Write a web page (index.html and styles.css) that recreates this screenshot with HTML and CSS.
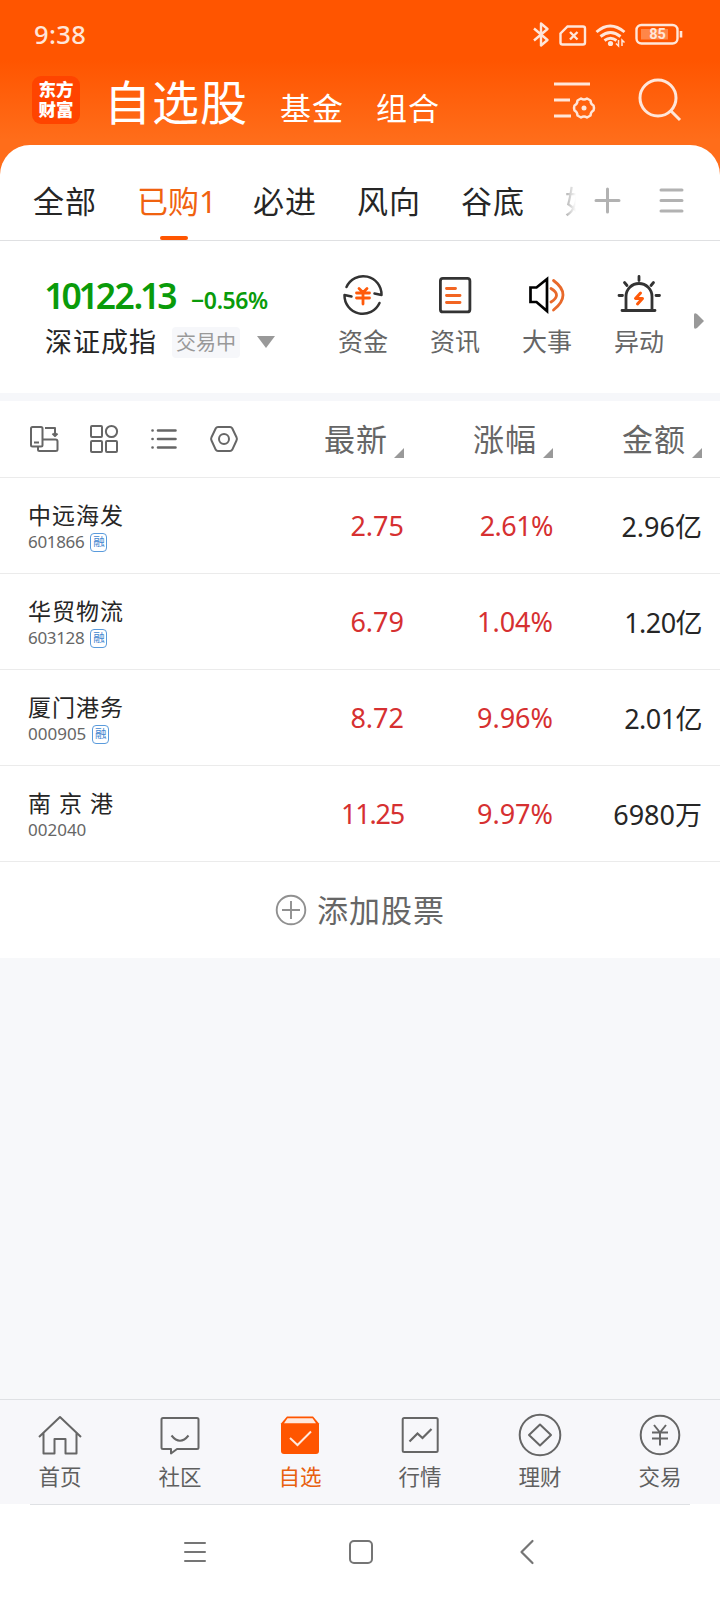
FILE: index.html
```html
<!DOCTYPE html>
<html lang="zh-CN">
<head>
    <meta charset="UTF-8">
    <meta name="viewport" content="width=device-width, initial-scale=1.0">
    <title>自选股</title>
    <link rel="stylesheet" href="styles.css">
</head>
<body>

<header class="header">
    <div class="status">
        <span class="time">9:38</span>
        <svg class="status-icons" width="156" height="30" viewBox="0 0 156 30" fill="none" stroke="#ffe6d9" stroke-width="2.400">
            <!-- bluetooth -->
            <path d="M2 8.500l13.500 11.500-6.500 5.500V3.500l6.500 5.500L2 20.500" stroke-linejoin="round"/>
            <!-- no sim -->
            <path d="M35.500 6.500H51q2 0 2 2v14q0 2-2 2H30.500q-2 0-2-2v-9z"/>
            <path d="M38 12l7.500 7.500M45.500 12l-7.500 7.500"/>
            <!-- wifi -->
            <path d="M64.500 12q13.500-12 28 0M68.500 16.500q10-8 20 0M72.500 20.500q6-4.500 12 0" stroke-width="2.900"/>
            <circle cx="78.500" cy="23.500" r="2.600" fill="#ffe6d9" stroke="none"/>
            <path d="M86.500 20v6l-2.500-2.500M90 26v-6l2.500 2.500" stroke-width="1.500"/>
            <!-- battery -->
            <rect x="104.500" y="5" width="41" height="18.500" rx="5"/>
            <rect x="109" y="9" width="27" height="10.500" fill="#ff8648" stroke="none"/>
            <path d="M149 11v6.500" stroke-width="2.600"/>
            <text x="125.500" y="19.300" class="battery-num">85</text>
        </svg>
    </div>
    <div class="titlebar">
        <div class="logo"><span>东方</span><span>财富</span></div>
        <nav class="top-nav">
            <span class="top-main">自选股</span>
            <span class="top-sub">基金</span>
            <span class="top-sub">组合</span>
        </nav>
        <svg class="manage" width="44" height="40" viewBox="0 0 44 40" fill="none" stroke="#ffe6d9" stroke-width="3">
            <path d="M1 5h36M1 21h16M1 37h17"/>
            <path d="M28 19.500q3 2 6 0l3.500 2q0 3.500 3 5l.5 2.500-.5 2.500q-3 1.500-3 5l-3.500 2q-3-2-6 0l-3.500-2q0-3.500-3-5L21 29l.5-2.500q3-1.500 3-5z" stroke-width="2.500" stroke-linejoin="round"/>
            <circle cx="31" cy="29" r="2.500" fill="#ffe6d9" stroke="none"/>
        </svg>
        <svg class="search" width="44" height="44" viewBox="0 0 44 44" fill="none" stroke="#ffe6d9" stroke-width="3">
            <circle cx="20" cy="20" r="18"/>
            <path d="M32 32l10 10"/>
        </svg>
    </div>
</header>

<main class="sheet">
    <div class="tabs">
        <div class="tab-list">
            <span class="tab">全部</span>
            <span class="tab active">已购1</span>
            <span class="tab">必进</span>
            <span class="tab">风向</span>
            <span class="tab">谷底</span>
            <span class="tab cut">好</span>
        </div>
        <svg class="tab-tools" width="90" height="28" viewBox="0 0 90 28" fill="none" stroke="#b2b2b2" stroke-width="3" stroke-linecap="round">
            <path d="M2 13.500h23M13.500 2v23M67 3h21M67 13.500h21M67 24h21"/>
        </svg>
    </div>

    <section class="market">
        <div class="index">
            <div class="index-top"><span class="index-value"><i class="one">1</i>0<i class="one">1</i>22.<i class="one">1</i>3</span><span class="index-pct">−0.56%</span></div>
            <div class="index-bottom">
                <span class="index-name">深证成指</span>
                <span class="index-state">交易中</span>
                <i class="caret"></i>
            </div>
        </div>
        <div class="shortcuts">
            <div class="shortcut">
                <svg width="44" height="44" viewBox="0 0 44 44" fill="none" stroke="#333" stroke-width="2.500" stroke-linecap="round" stroke-linejoin="round">
                    <path d="M5.500 14A18.300 18.300 0 0 1 40.500 22l-7-1.500M38.500 30A18.300 18.300 0 0 1 3.500 22l7 1.500"/>
                    <path d="M18 15.500l4 4 4-4M15.500 20h13M15.500 25h13M22 19.500v11.500" stroke="#ff5a0a" stroke-width="2.800"/>
                </svg>
                <span>资金</span>
            </div>
            <div class="shortcut">
                <svg width="44" height="44" viewBox="0 0 44 44" fill="none" stroke="#333" stroke-width="2.800" stroke-linecap="round">
                    <rect x="7.400" y="5.400" width="29.500" height="33.500" rx="2.500"/>
                    <path d="M13.500 15.500h9M13.500 22.500h13.500M13.500 29.500h13.500" stroke="#f26522" stroke-width="2.900"/>
                </svg>
                <span>资讯</span>
            </div>
            <div class="shortcut">
                <svg width="44" height="44" viewBox="0 0 44 44" fill="none" stroke="#000" stroke-width="2.700" stroke-linecap="round">
                    <path d="M5.500 14.500h6l10.500-8.500v32l-10.500-9h-6z"/>
                    <path d="M26 15.500q11 6.500 0 13.500M28.500 7.500q19 14 0 29.500" stroke="#e8692b" stroke-width="2.800"/>
                </svg>
                <span>大事</span>
            </div>
            <div class="shortcut">
                <svg width="44" height="44" viewBox="0 0 44 44" fill="none" stroke="#333" stroke-width="2.800" stroke-linecap="round">
                    <path d="M9 37.500V23.500a13 13 0 0 1 26 0v14M5 37.500h33M22 3.500v4M7.500 9.500l2.500 3M36.500 9.500l-2.500 3M2 22.500h3.500M39 22.500h3.500"/>
                    <path d="M23.500 20l-5 5.500h7l-5 5.500" stroke="#ff5a0a" stroke-width="3" stroke-linejoin="round"/>
                </svg>
                <span>异动</span>
            </div>
        </div>
        <svg class="more" width="10" height="16" viewBox="0 0 10 16"><path d="M0 2q0-3 3-1l7 7-7 7q-3 2-3-1z" fill="#999"/></svg>
    </section>

    <section class="stocks">
        <div class="row head">
            <div class="tools">
                <svg width="30" height="30" viewBox="0 0 30 30" fill="none" stroke="#666" stroke-width="2" stroke-linejoin="round">
                    <rect x="2" y="3" width="11.500" height="19.500" rx="1.500"/>
                    <path d="M5 18.500h5M16 4h10v8M23.500 9.500l2.500 2.500 2.500-2.500M13.500 15.500h13q2 0 2 2v8q0 1.500-2 1.500H10.500q-1.500 0-1.500-1.500V23"/>
                </svg>
                <svg width="30" height="30" viewBox="0 0 30 30" fill="none" stroke="#666" stroke-width="2">
                    <rect x="2" y="2" width="11" height="11" rx="1"/><circle cx="22.500" cy="7.500" r="5.600"/>
                    <rect x="2" y="17" width="11" height="11" rx="1"/><rect x="17" y="17" width="11" height="11" rx="1"/>
                </svg>
                <svg width="30" height="30" viewBox="0 0 30 30" fill="none" stroke="#666" stroke-width="2.600" stroke-linecap="round">
                    <path d="M9 6.500h17.500M9 15h17.500M9 23.500h17.500M3.500 6.500h.1M3.500 15h.1M3.500 23.500h.1"/>
                </svg>
                <svg width="30" height="30" viewBox="0 0 30 30" fill="none" stroke="#666" stroke-width="2" stroke-linejoin="round">
                    <path d="M9 3h12q1.500 0 2.200 1.200l4.300 9q.8 1.800 0 3.300l-4.300 9.300Q22.500 27 21 27H9q-1.500 0-2.200-1.200L2.500 16.500q-.8-1.500 0-3.300l4.300-9Q7.500 3 9 3z"/>
                    <circle cx="15" cy="15" r="5"/>
                </svg>
            </div>
            <span class="col sort">最新</span>
            <span class="col sort">涨幅</span>
            <span class="col sort">金额</span>
        </div>
        <div class="row">
            <div class="stock"><span class="name">中远海发</span><span class="code tight">601866<b class="badge">融</b></span></div>
            <span class="col up">2.75</span><span class="col up tight">2.61%</span><span class="col">2.96亿</span>
        </div>
        <div class="row">
            <div class="stock"><span class="name">华贸物流</span><span class="code tight">603128<b class="badge">融</b></span></div>
            <span class="col up">6.79</span><span class="col up">1.04%</span><span class="col tight">1.20亿</span>
        </div>
        <div class="row">
            <div class="stock"><span class="name">厦门港务</span><span class="code">000905<b class="badge">融</b></span></div>
            <span class="col up">8.72</span><span class="col up">9.96%</span><span class="col tight">2.01亿</span>
        </div>
        <div class="row">
            <div class="stock"><span class="name">南 京 港</span><span class="code">002040</span></div>
            <span class="col up tighter">11.25</span><span class="col up">9.97%</span><span class="col">6980万</span>
        </div>
        <div class="add">
            <svg width="32" height="32" viewBox="0 0 32 32" fill="none" stroke="#909090" stroke-width="1.900">
                <circle cx="16" cy="16" r="14.300"/><path d="M7 16h18M16 7v18"/>
            </svg>
            <span>添加股票</span>
        </div>
    </section>
</main>

<nav class="bottom-nav">
    <div class="item">
        <svg width="44" height="44" viewBox="0 0 44 44" fill="none" stroke="#666" stroke-width="2" stroke-linejoin="round">
            <path d="M1 24L22 4l21 20M5.500 20v20.500h11V26h11v14.500h11V20"/>
        </svg>
        <span>首页</span>
    </div>
    <div class="item">
        <svg width="44" height="44" viewBox="0 0 44 44" fill="none" stroke="#666" stroke-width="2" stroke-linejoin="round">
            <path d="M5 5h34q1.500 0 1.500 1.500v28q0 1.500-1.500 1.500H19l-6 4.500V36H5q-1.500 0-1.500-1.500v-28Q3.500 5 5 5z"/>
            <path d="M13.500 22.500q8.500 10.500 17 0"/>
        </svg>
        <span>社区</span>
    </div>
    <div class="item on">
        <svg width="44" height="44" viewBox="0 0 44 44" fill="none">
            <path d="M9 3.500h26l6 7V38q0 3-3 3h-32q-3 0-3-3V10.500z" fill="#ff5500"/>
            <path d="M9.500 5.300h25l3.500 5h-32z" fill="#ffe9de"/>
            <path d="M12 25l7.500 7L33 18.500" stroke="#ffe9de" stroke-width="2"/>
        </svg>
        <span>自选</span>
    </div>
    <div class="item">
        <svg width="44" height="44" viewBox="0 0 44 44" fill="none" stroke="#666" stroke-width="2">
            <rect x="4.700" y="5" width="35" height="34" rx="1.500"/>
            <path d="M11.500 28.500l8-8 5 4.500 9-9" stroke-width="2.200"/>
        </svg>
        <span>行情</span>
    </div>
    <div class="item">
        <svg width="44" height="44" viewBox="0 0 44 44" fill="none" stroke="#666" stroke-width="2" stroke-linejoin="round">
            <circle cx="22" cy="22" r="20.300"/><path d="M22 11.500L33 22 22 32.500 11 22z"/>
        </svg>
        <span>理财</span>
    </div>
    <div class="item">
        <svg width="44" height="44" viewBox="0 0 44 44" fill="none" stroke="#666" stroke-width="2">
            <circle cx="22" cy="22" r="19.300"/>
            <path d="M16 12l6 7.500 6-7.500M14 19.500h16M14 25.500h16M22 19.500v13"/>
        </svg>
        <span>交易</span>
    </div>
</nav>

<footer class="system-bar">
    <svg width="26" height="26" viewBox="0 0 26 26" fill="none" stroke="#757575" stroke-width="2" stroke-linecap="round"><path d="M3 4h20M3 13h20M3 22h20"/></svg>
    <svg width="26" height="26" viewBox="0 0 26 26" fill="none" stroke="#757575" stroke-width="2"><rect x="2" y="2" width="22" height="22" rx="4"/></svg>
    <svg width="26" height="26" viewBox="0 0 26 26" fill="none" stroke="#757575" stroke-width="2.200" stroke-linecap="round" stroke-linejoin="round"><path d="M18.500 2L7.500 13l11 11"/></svg>
</footer>

</body>
</html>
```
FILE: styles.css
```css
* {
    box-sizing: border-box;
}

body {
    margin: 0;
    width: 720px;
    height: 1600px;
    display: flex;
    flex-direction: column;
    overflow: hidden;
    background-color: #f7f8fa;
    color: #262626;
    font-family: "Noto Sans", "Noto Sans CJK SC", sans-serif;
    font-weight: 400;
}

svg {
    display: block;
    flex: none;
}

span {
    white-space: nowrap;
}

/* orange header */
.header {
    height: 175px;
    flex: none;
    background: linear-gradient(#ff5500 60px, #ff6d1a 140px);
    color: #fff;
}

.status {
    height: 70px;
    padding: 20px 32px 0 34px;
    display: flex;
    justify-content: space-between;
}

.time {
    font-size: 25.5px;
    line-height: 29px;
    font-weight: 500;
    letter-spacing: 0.4px;
    color: #ffe6d9;
}

.battery-num {
    font-family: Roboto, sans-serif;
    font-size: 14.5px;
    font-weight: 700;
    fill: #ffe6d9;
    stroke: none;
    text-anchor: middle;
}

.titlebar {
    height: 70px;
    padding-left: 32px;
    display: flex;
    align-items: flex-start;
}

.logo {
    width: 48px;
    height: 48px;
    margin-top: 6px;
    padding-top: 3px;
    border-radius: 9px;
    background-color: #ff4400;
    display: flex;
    flex-direction: column;
    align-items: center;
    font-size: 17.5px;
    line-height: 20px;
    font-weight: 900;
}

.top-nav {
    width: 448px;
    margin-left: 24px;
    display: flex;
    align-items: baseline;
    line-height: 64px;
}

.top-main {
    font-size: 47px;
    letter-spacing: 1px;
    margin-right: 32px;
}

.top-sub {
    font-size: 31px;
    letter-spacing: 1px;
    margin-right: 32px;
}

.manage {
    margin-top: 9px;
    margin-left: 1px;
}

.search {
    margin-top: 8px;
    margin-left: 41px;
}

/* white sheet */
.sheet {
    margin-top: -30px;
    flex: none;
    background-color: #fff;
    border-radius: 30px 30px 0 0;
}

.tabs {
    height: 96px;
    padding-left: 33px;
    display: flex;
    border-bottom: 1px solid #dfe0e2;
}

.tab-list {
    width: 561px;
    display: flex;
    gap: 40px;
}

.tab {
    position: relative;
    width: 64px;
    font-size: 31px;
    letter-spacing: 1px;
    line-height: 113px;
}

.tab.active {
    width: 76px;
    letter-spacing: 0;
    color: #f0620f;
}

.tab.active::after {
    content: "";
    position: absolute;
    left: 23px;
    bottom: 0;
    width: 28px;
    height: 4px;
    border-radius: 2px;
    background-color: #ff5500;
}

/* last tab fades out under the tools */
.tab.cut {
    width: 11px;
    overflow: hidden;
    color: transparent;
    background: linear-gradient(90deg, #aaa, #fff);
    background-clip: text;
    -webkit-background-clip: text;
}

.tab-tools {
    margin-top: 42px;
}

.market {
    height: 160px;
    padding-left: 45px;
    display: flex;
    border-bottom: 8px solid #f6f7fa;
}

.index {
    width: 272px;
    flex: none;
    padding-top: 30px;
}

.index-top {
    display: flex;
    align-items: baseline;
    line-height: 48px;
    color: #0a9b0a;
    font-weight: 600;
}

.index-value {
    width: 146px;
    padding-left: 1px;
    font-size: 35.5px;
    letter-spacing: -1.4px;
}

/* narrow digit 1 */
.one {
    font-style: normal;
    margin: 0 -0.05em;
}

.index-pct {
    font-size: 23px;
    letter-spacing: -0.4px;
}

.index-bottom {
    display: flex;
    align-items: center;
    height: 44px;
    margin-top: -1px;
}

.index-name {
    width: 127px;
    margin-bottom: 7px;
    font-size: 27px;
    letter-spacing: 1px;
    line-height: 30px;
}

.index-state {
    width: 68px;
    height: 31px;
    margin-bottom: 6px;
    padding-left: 4px;
    border-radius: 4px;
    background-color: #f6f7fa;
    color: #999;
    font-size: 20px;
    line-height: 31px;
}

.caret {
    margin-left: 17px;
    margin-bottom: 6px;
    border: 9px solid transparent;
    border-top: 12px solid #999;
    border-bottom: 0;
}

.shortcuts {
    display: flex;
    width: 368px;
}

.shortcut {
    width: 92px;
    padding-top: 32px;
    display: flex;
    flex-direction: column;
    align-items: center;
    font-size: 25px;
    line-height: 48px;
    color: #666;
}

.more {
    margin-left: 9px;
    margin-top: 72px;
}

/* stock table */
.row {
    height: 96px;
    padding-left: 28px;
    display: flex;
    align-items: center;
    border-bottom: 1px solid #ebebeb;
    font-size: 27px;
}

.row.head {
    height: 77px;
    color: #666;
}

.tools {
    width: 227px;
    padding-left: 1px;
    display: flex;
    gap: 30px;
}

.stock {
    width: 227px;
    padding-top: 2px;
    display: flex;
    flex-direction: column;
}

.name {
    font-size: 23px;
    letter-spacing: 1px;
    line-height: 30px;
}

.code {
    display: flex;
    align-items: center;
    margin-top: 1px;
    font-size: 17px;
    line-height: 22px;
    color: #666;
}

.badge {
    width: 17px;
    height: 19px;
    margin-left: 6px;
    border: 1.5px solid #5a9bdc;
    border-radius: 4px;
    color: #3f86cf;
    font-size: 11.5px;
    font-weight: 400;
    line-height: 16px;
    display: flex;
    justify-content: center;
}

.col {
    width: 149px;
    text-align: right;
}

.up {
    color: #d63031;
}

.tight {
    letter-spacing: -0.02em;
}

.tighter {
    letter-spacing: -0.045em;
}

.sort {
    display: flex;
    justify-content: flex-end;
    align-items: center;
    height: 44px;
    line-height: 42px;
    font-size: 31px;
    letter-spacing: 1px;
}

.sort::after {
    content: "";
    margin-left: 6px;
    margin-top: 28px;
    border-left: 10px solid transparent;
    border-bottom: 10px solid #999;
}

.add {
    height: 96px;
    display: flex;
    justify-content: center;
    align-items: center;
    gap: 10px;
    font-size: 31px;
    letter-spacing: 1px;
    line-height: 40px;
    color: #666;
}

/* bottom bars */
.bottom-nav {
    height: 105px;
    margin-top: auto;
    flex: none;
    display: flex;
    border-top: 1px solid #dfe1e4;
    background-color: #f7f7fa;
}

.item {
    width: 120px;
    padding-top: 13px;
    display: flex;
    flex-direction: column;
    align-items: center;
    font-size: 21.5px;
    line-height: 40px;
    color: #5f5f5f;
}

.item.on {
    color: #e8600f;
}

.system-bar {
    height: 96px;
    padding-left: 2px;
    flex: none;
    display: flex;
    justify-content: center;
    align-items: center;
    gap: 140px;
    background: linear-gradient(#dfe1e4, #dfe1e4) 30px 0 / 660px 1px no-repeat #fff;
}
```
